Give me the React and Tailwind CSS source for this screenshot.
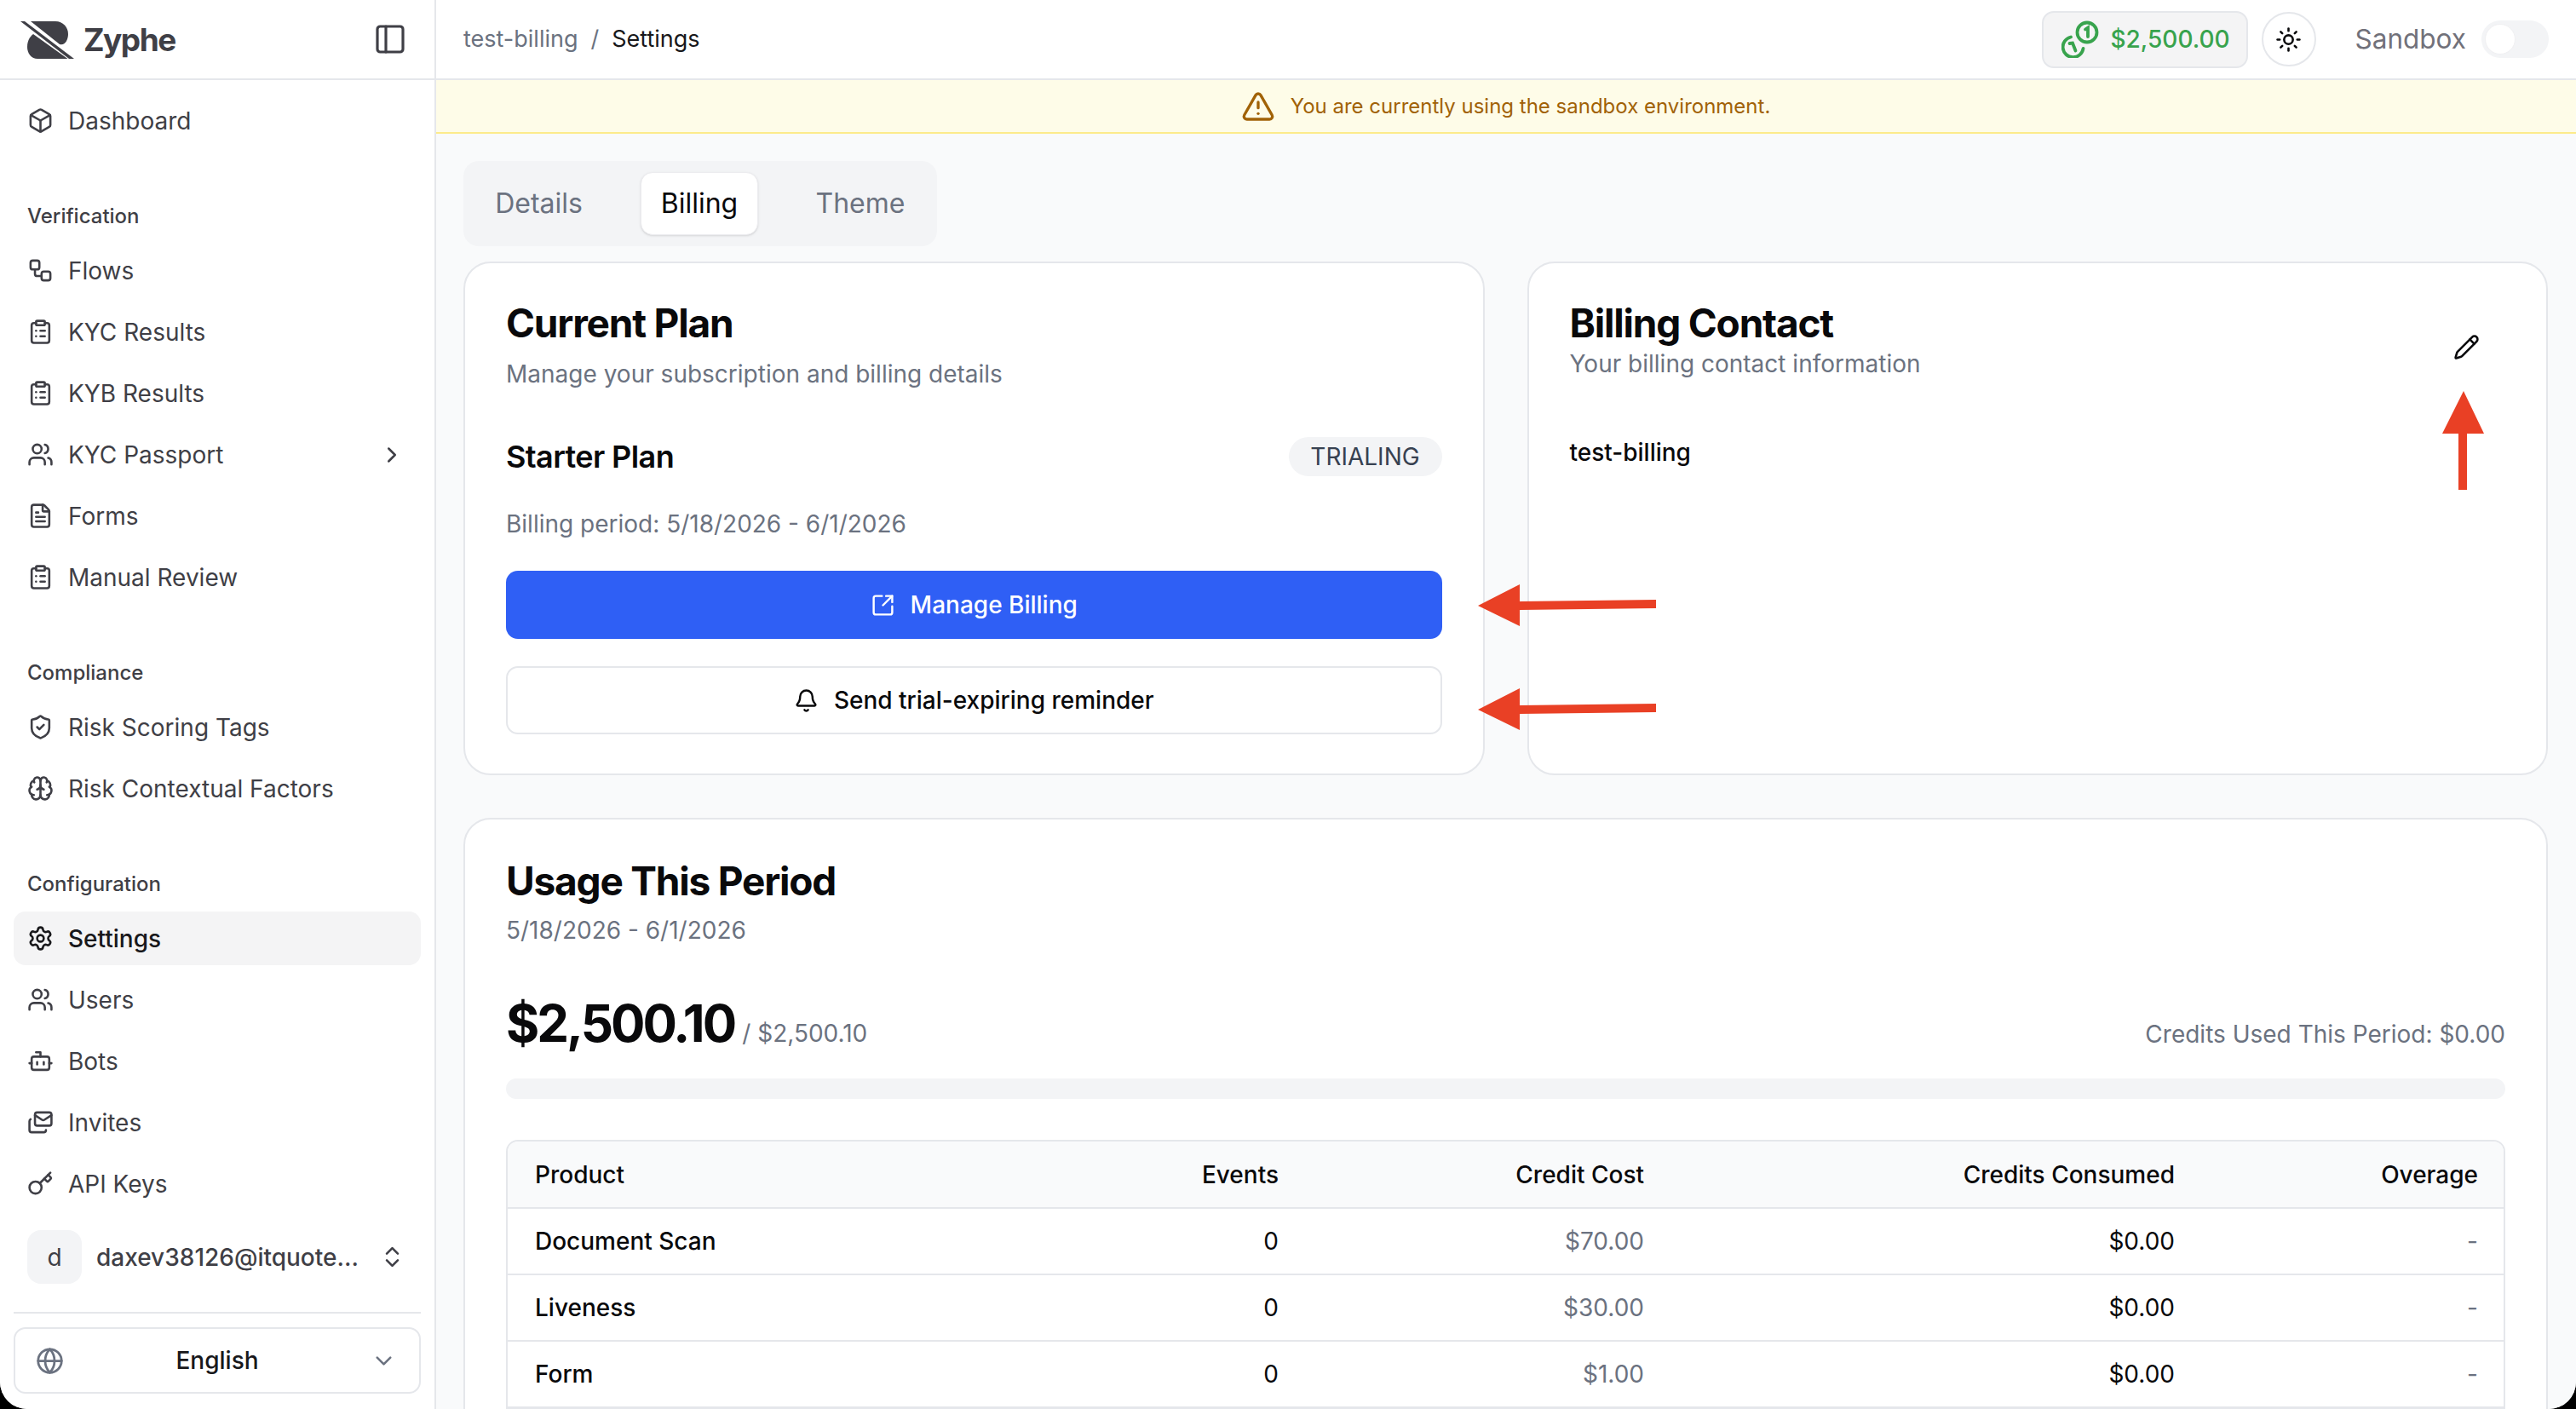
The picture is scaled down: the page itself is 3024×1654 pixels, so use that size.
import {
    Bell, Bot, Box, Brain, ChevronDown, ChevronRight, ChevronsUpDown, ClipboardList, FileText,
    Globe, Key, Mails, PanelLeft, Pencil, Settings, ShieldCheck, SquareArrowOutUpRight,
    Sun, TriangleAlert, Users, Workflow,
} from 'lucide-react'

const groups = [
    {
        label: 'Verification',
        items: [
            { name: 'Flows', icon: Workflow },
            { name: 'KYC Results', icon: ClipboardList },
            { name: 'KYB Results', icon: ClipboardList },
            { name: 'KYC Passport', icon: Users, more: true },
            { name: 'Forms', icon: FileText },
            { name: 'Manual Review', icon: ClipboardList },
        ],
    },
    {
        label: 'Compliance',
        items: [
            { name: 'Risk Scoring Tags', icon: ShieldCheck },
            { name: 'Risk Contextual Factors', icon: Brain },
        ],
    },
    {
        label: 'Configuration',
        items: [
            { name: 'Settings', icon: Settings, active: true },
            { name: 'Users', icon: Users },
            { name: 'Bots', icon: Bot },
            { name: 'Invites', icon: Mails },
            { name: 'API Keys', icon: Key },
        ],
    },
]

const usage = [
    { product: 'Document Scan', events: '0', cost: '$70.00', used: '$0.00', overage: '-' },
    { product: 'Liveness', events: '0', cost: '$30.00', used: '$0.00', overage: '-' },
    { product: 'Form', events: '0', cost: '$1.00', used: '$0.00', overage: '-' },
]

const Logo = () => (
    <svg width="64" height="46" viewBox="24 22 64 46" className="shrink-0">
        <path d="M36 23H65C74 23 80 30 80 38C80 45 76 52 70 50Z" fill="#3f3f46" />
        <path d="M24 23H29L87 67H81Z" fill="#3f3f46" />
        <path d="M39 38L79.5 67H44C37 67 32 61 32 53C32 46 35 41 39 38Z" fill="#3f3f46" />
    </svg>
)

const CoinsIcon = () => (
    <svg width="44" height="44" viewBox="0 0 44 44" fill="none" stroke="#38a34d" strokeWidth="3.8" strokeLinecap="round" className="shrink-0">
        <circle cx="30" cy="14" r="11.5" />
        <path d="M28 10.5L31 8.5V19" />
        <path d="M11 19.5A12 12 0 1 0 25.5 33" />
        <path d="M9.5 27L13 26.5L16.5 35.5" />
    </svg>
)

const NavRow = ({ item }) => {
    const Icon = item.icon
    return (
        <a className={`flex h-[63px] items-center gap-[17px] rounded-[14px] px-4 text-[28px] ${item.active ? 'bg-[#f4f4f5] font-medium text-[#18181b]' : 'text-[#3f3f46]'}`}>
            <Icon size={31} strokeWidth={2} className="shrink-0" />
            <span className="flex-1">{item.name}</span>
            {item.more && <ChevronRight size={30} className="mr-[3px]" />}
        </a>
    )
}

const Sidebar = () => (
    <aside className="flex w-[512px] shrink-0 flex-col border-r-2 border-[#e5e7eb] bg-white">
        <div className="flex h-[94px] shrink-0 items-center justify-between border-b-2 border-[#e5e7eb] pl-6 pr-[32px]">
            <div className="flex items-center gap-[10px] pt-[1px]">
                <Logo />
                <span className="text-[37px] font-bold tracking-[-1.5px] text-[#3f3f46]">Zyphe</span>
            </div>
            <PanelLeft size={40} strokeWidth={1.9} className="text-[#3f3f46]" />
        </div>
        <nav className="flex flex-col px-4 pt-4">
            <NavRow item={{ name: 'Dashboard', icon: Box }} />
            {groups.map((group) => (
                <div key={group.label} className="mt-[58px] flex flex-col gap-[9px]">
                    <div className="flex h-[46px] items-center px-4 text-[24px] font-medium text-[#3f3f46]">{group.label}</div>
                    {group.items.map((item) => <NavRow key={item.name} item={item} />)}
                </div>
            ))}
        </nav>
        <div className="mt-[23px] flex flex-col px-4">
            <div className="flex h-[63px] items-center pl-4 pr-[18px]">
                <div className="flex h-[63px] w-[64px] items-center justify-center rounded-[16px] bg-[#f3f4f6] text-[28px] text-[#3f3f46]">d</div>
                <span className="ml-[17px] flex-1 text-[28px] font-medium whitespace-nowrap text-[#3f3f46]">daxev38126@itquote...</span>
                <ChevronsUpDown size={31} className="text-[#3f3f46]" />
            </div>
            <div className="mt-[33px] h-[2px] bg-[#e5e7eb]" />
            <div className="mt-[16px] flex h-[78px] items-center justify-between rounded-[14px] border-2 border-[#e5e7eb] bg-white pl-[24px] pr-[26px]">
                <Globe size={33} className="text-[#6b7280]" />
                <span className="text-[28px] font-medium text-[#18181b]">English</span>
                <ChevronDown size={31} className="text-[#6b7280]" />
            </div>
        </div>
    </aside>
)

const Header = () => (
    <header className="flex h-[94px] shrink-0 items-center justify-between border-b-2 border-[#e5e7eb] bg-white pl-8 pr-[32px]">
        <div className="flex items-center gap-[15px] text-[27px]">
            <span className="text-[#6b7280]">test-billing</span>
            <span className="text-[#6b7280]">/</span>
            <span className="text-[#18181b]">Settings</span>
        </div>
        <div className="flex items-center">
            <div className="flex h-[67px] w-[242px] items-center gap-[14px] rounded-[14px] border-2 border-[#e5e7eb] bg-[#f4f4f5] pl-[21px] text-[28px] font-medium text-[#38a34d]">
                <CoinsIcon />
                <span>$2,500.00</span>
            </div>
            <button className="ml-[16px] flex h-[64px] w-[64px] items-center justify-center rounded-full border-2 border-[#e5e7eb] bg-white text-[#09090b]">
                <Sun size={31} />
            </button>
            <span className="ml-[46px] text-[31.5px] text-[#71717a]">Sandbox</span>
            <div className="ml-[18px] flex h-[44px] w-[79px] items-center rounded-full bg-[#f3f4f6] pl-[4px]">
                <div className="h-[36px] w-[36px] rounded-full border border-[#f0f0f2] bg-white" />
            </div>
        </div>
    </header>
)

const Banner = () => (
    <div className="flex h-[63px] shrink-0 items-center justify-center gap-[18px] border-b-2 border-[#fdeb8b] bg-[#fefce8] pr-[1px] text-[24px] text-[#a16207]">
        <TriangleAlert size={40} strokeWidth={2} />
        <span>You are currently using the sandbox environment.</span>
    </div>
)

const Tabs = () => (
    <div className="flex h-[100px] w-[556px] items-center rounded-[18px] bg-[#f3f4f6] pl-[14px] text-[32px] text-[#6b7280]">
        <span className="flex h-[74px] w-[149px] shrink-0 items-center justify-center">Details</span>
        <span className="ml-[45px] flex h-[74px] w-[138px] shrink-0 items-center justify-center rounded-[14px] border border-[#ececef] bg-white text-[#09090b] shadow-sm">Billing</span>
        <span className="ml-[65px] flex h-[74px] w-[110px] shrink-0 items-center justify-center">Theme</span>
    </div>
)

const PlanCard = () => (
    <section className="flex h-[603px] flex-col rounded-[32px] border-2 border-[#e5e7eb] bg-white px-[48px]">
        <h2 className="mt-[42px] text-[46px] leading-[56px] font-bold tracking-[-1.2px] text-[#09090b]">Current Plan</h2>
        <p className="mt-[14px] text-[28px] leading-[36px] text-[#6b7280]">Manage your subscription and billing details</p>
        <div className="mt-[56px] flex h-[46px] items-center justify-between">
            <h3 className="text-[36px] font-semibold tracking-[-0.6px] text-[#09090b]">Starter Plan</h3>
            <span className="flex h-[46px] w-[180px] items-center justify-center rounded-full bg-[#f3f4f6] text-[28px] text-[#374151]">TRIALING</span>
        </div>
        <p className="mt-[38px] text-[28px] leading-[36px] text-[#6b7280]">Billing period: 5/18/2026 - 6/1/2026</p>
        <button className="mt-[37px] flex h-[80px] items-center justify-center gap-[18px] rounded-[14px] bg-[#2f5ff5] text-[28px] font-medium text-white">
            <SquareArrowOutUpRight size={29} />
            Manage Billing
        </button>
        <button className="mt-[32px] flex h-[80px] items-center justify-center gap-[18px] rounded-[14px] border-2 border-[#e5e7eb] bg-white text-[28px] font-medium text-[#09090b]">
            <Bell size={29} />
            Send trial-expiring reminder
        </button>
    </section>
)

const ContactCard = () => (
    <section className="flex h-[603px] flex-col rounded-[32px] border-2 border-[#e5e7eb] bg-white px-[48px]">
        <div className="flex items-start justify-between">
            <div>
                <h2 className="mt-[42px] text-[46px] leading-[56px] font-bold tracking-[-1.2px] text-[#09090b]">Billing Contact</h2>
                <p className="mt-[2px] text-[28px] leading-[36px] text-[#6b7280]">Your billing contact information</p>
            </div>
            <Pencil size={31} className="mt-[83px] mr-[30px] text-[#09090b]" />
        </div>
        <p className="mt-[68px] text-[28px] leading-[36px] font-medium text-[#09090b]">test-billing</p>
    </section>
)

const UsageTable = () => (
    <div className="mt-[48px] overflow-hidden rounded-t-[14px] border-2 border-[#e5e7eb]">
        <table className="w-full table-fixed border-collapse text-[28px]">
            <thead>
                <tr className="h-[78px] border-b-2 border-[#e5e7eb] bg-[#f9fafb] font-medium text-[#09090b]">
                    <th className="w-[602px] pl-[32px] text-left font-medium">Product</th>
                    <th className="pr-[27px] text-right font-medium">Events</th>
                    <th className="w-[432px] pr-[30px] text-right font-medium">Credit Cost</th>
                    <th className="w-[623px] pr-[30px] text-right font-medium">Credits Consumed</th>
                    <th className="w-[356px] pr-[30px] text-right font-medium">Overage</th>
                </tr>
            </thead>
            <tbody>
                {usage.map((row) => (
                    <tr key={row.product} className="h-[78px] border-b-2 border-[#e5e7eb]">
                        <td className="pl-[32px] font-medium text-[#09090b]">{row.product}</td>
                        <td className="pr-[27px] text-right text-[#09090b]">{row.events}</td>
                        <td className="pr-[30px] text-right text-[#6b7280]">{row.cost}</td>
                        <td className="pr-[30px] text-right text-[#09090b]">{row.used}</td>
                        <td className="pr-[30px] text-right text-[#6b7280]">{row.overage}</td>
                    </tr>
                ))}
            </tbody>
        </table>
    </div>
)

const UsageCard = () => (
    <section className="mt-[50px] rounded-t-[32px] border-2 border-[#e5e7eb] bg-white px-[48px]">
        <h2 className="mt-[44px] text-[46px] leading-[56px] font-bold tracking-[-1.2px] text-[#09090b]">Usage This Period</h2>
        <p className="mt-[12px] text-[28px] leading-[36px] text-[#6b7280]">5/18/2026 - 6/1/2026</p>
        <div className="mt-[56px] flex h-[70px] items-center justify-between">
            <div className="flex items-baseline gap-[9px]">
                <span className="text-[60px] font-bold tracking-[-3px] text-[#09090b]">$2,500.10</span>
                <span className="text-[28px] text-[#6b7280]">/ $2,500.10</span>
            </div>
            <span className="mt-[25px] text-[28px] text-[#6b7280]">Credits Used This Period: $0.00</span>
        </div>
        <div className="mt-[30px] h-[24px] rounded-full bg-[#f3f4f6]" />
        <UsageTable />
    </section>
)

// Hand-drawn red markers that sit on top of the screenshot
const Annotations = () => (
    <svg width="3024" height="1654" className="pointer-events-none absolute top-0 left-0" fill="#e94025">
        <path d="M1735 711L1784 686V706L1944 704V714L1784 716V735Z" />
        <path d="M1735 833L1784 808V828L1944 826V836L1784 838V857Z" />
        <path d="M2892 459L2916 509H2896V575H2886V509H2867Z" />
    </svg>
)

const App = () => (
    <div className="relative h-[1654px] w-[3024px] overflow-hidden bg-black font-['Inter',sans-serif]">
        <div className="flex h-full overflow-hidden rounded-b-[32px] bg-white">
            <Sidebar />
            <div className="flex min-w-0 flex-1 flex-col">
                <Header />
                <Banner />
                <main className="flex-1 overflow-hidden bg-[#f9fafb] pt-[32px] pr-[33px] pl-[32px]">
                    <Tabs />
                    <div className="mt-[18px] grid grid-cols-2 gap-[50px]">
                        <PlanCard />
                        <ContactCard />
                    </div>
                    <UsageCard />
                </main>
            </div>
        </div>
        <Annotations />
    </div>
)

export default App
